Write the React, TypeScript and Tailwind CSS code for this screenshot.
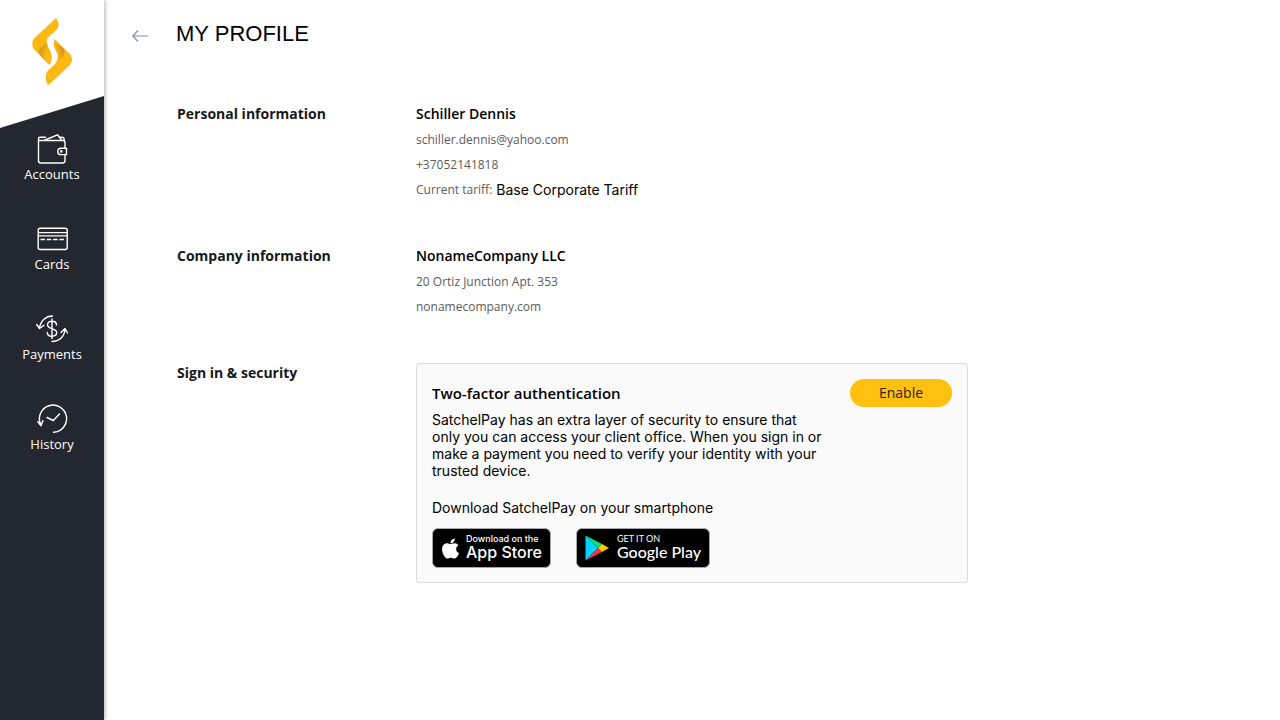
import type { ReactNode } from "react"
import { FaApple } from "react-icons/fa"

interface NavItem {
    label: string
    icon: ReactNode
}

/* ================= ICONS ================= */
const WalletIcon = () => (
    <svg width="32" height="32" viewBox="0 0 32 32" fill="none" stroke="currentColor" strokeWidth="1.4" strokeLinecap="round" strokeLinejoin="round">
        <path d="M29 14V8.500a2 2 0 0 0-2-2H4a1.500 1.500 0 0 1 0-3.200h5.500M29 21v5.500a2.500 2.500 0 0 1-2.500 2.500H5a2.500 2.500 0 0 1-2.500-2.500V5" />
        <path d="M9 6 21.500 0.800 25.500 6M22 1.500l2 2M24.500 3.300H26q2 0 2.200 2.500" />
        <path d="M30.500 14.200H25a3.200 3.200 0 0 0 0 6.400h5.500z" />
        <circle cx="25.300" cy="17.400" r="0.600" />
    </svg>
)

const CardIcon = () => (
    <svg width="32" height="32" viewBox="0 0 32 32" fill="none" stroke="currentColor" strokeWidth="1.4">
        <rect x="2.200" y="4.300" width="29" height="21.200" rx="2" />
        <path d="M2.200 8.600h29M2.200 11.900h29" />
        <path d="M4.500 15.500h25" strokeDasharray="4.500 1.800" />
    </svg>
)

const PaymentsIcon = () => (
    <svg width="32" height="32" viewBox="0 0 32 32" fill="none" stroke="currentColor" strokeWidth="1.4" strokeLinecap="round" strokeLinejoin="round">
        <path d="M16.500 2C10 2 4.500 6.500 3.500 14.200M0.700 10.500l2.800 4 4.500-3.200" />
        <path d="M16 27.500c7 0 12.500-4.500 13-12.500M25 18.500l4-4 2.500 4.500" />
        <path d="M20.500 11c0-2.500-2-3.700-4.500-3.700S11.500 8.500 11.500 10.800c0 5 9.200 3 9.200 7.700 0 2.300-2.200 3.700-4.700 3.700s-4.700-1.400-4.700-3.800M16 5v19.500" />
    </svg>
)

const HistoryIcon = () => (
    <svg width="32" height="32" viewBox="0 0 32 32" fill="none" stroke="currentColor" strokeWidth="1.4" strokeLinecap="round" strokeLinejoin="round">
        <path d="M17.500 28.300A13.600 13.600 0 1 0 4.700 20.500M1.800 17.700l3.200 4 1.900-5" />
        <path d="m11 13.500 6.300 3 6.200-6.500" />
    </svg>
)

const Logo = () => (
    <svg width="42" height="68" viewBox="31 18 42 68" role="img" aria-label="SatchelPay">
        <defs>
            <linearGradient id="foldLeft" x1="0" y1="0" x2="1" y2="0.6">
                <stop offset="0" stopColor="#c98a1b" />
                <stop offset="0.700" stopColor="#fdb913" />
            </linearGradient>
            <linearGradient id="foldRight" x1="1" y1="0.2" x2="0" y2="0.8">
                <stop offset="0" stopColor="#c98a1b" />
                <stop offset="0.700" stopColor="#fdb913" />
            </linearGradient>
        </defs>
        <path d="M56 18Q61 25 56.500 30L50 35.500Q45.500 39 47 44Q48 47.500 50.500 52Q53 59 49.500 65L34.500 50Q30 44 34 38.500Z" fill="#fdb913" />
        <path d="M46.800 42.500Q47.500 47 50.500 52Q53 59 49.500 65L41.500 57Q37 51 41 47Z" fill="url(#foldLeft)" />
        <path d="M54.500 39L69.500 53.500Q74.500 59 70 65L48 85.500Q43.500 77 47.500 71L54 65Q59 60.500 57.500 53.500Q52.500 46 54.500 39Z" fill="#fdb913" />
        <path d="M54 41.500L63 48Q66.500 53 61.500 58L55.500 63.500Q59 59 57.500 53.500Q53 47 54 41.500Z" fill="url(#foldRight)" />
    </svg>
)

const PlayLogo = () => (
    <svg width="24" height="26" viewBox="0 0 24 26">
        <path d="M0.500 0.500v25L13 13z" fill="#00d2ff" />
        <path d="M0.500 0.500 17 9l-4 4z" fill="#00e676" />
        <path d="M0.500 25.500 17 17l-4-4z" fill="#f43249" />
        <path d="M17 9l7 4-7 4-4-4z" fill="#ffc900" />
    </svg>
)

const navItems: NavItem[] = [
    { label: "Accounts", icon: <WalletIcon /> },
    { label: "Cards", icon: <CardIcon /> },
    { label: "Payments", icon: <PaymentsIcon /> },
    { label: "History", icon: <HistoryIcon /> },
]

/* ================= SECTION ROW ================= */
function Section({ title, children }: { title: string; children: ReactNode }) {
    return (
        <section className="grid grid-cols-[239px_minmax(0,552px)]">
            <h2 className="text-sm leading-[26px] font-bold text-[#16181c]">{title}</h2>
            <div>{children}</div>
        </section>
    )
}

export default function App() {
    return (
        <div className="flex min-h-screen bg-white font-['Open_Sans',sans-serif] text-black">
            {/* --- SIDEBAR --- */}
            <aside className="flex w-[104px] shrink-0 flex-col shadow-[1px_0_4px_rgba(0,0,0,0.3)]">
                <a href="#" className="flex h-24 items-start justify-center pt-[18px]">
                    <Logo />
                </a>
                <nav className="flex flex-1 flex-col gap-5 bg-[#23272f] pt-[38px] [clip-path:polygon(0_32px,100%_0,100%_100%,0_100%)]">
                    {navItems.map((item) => (
                        <a key={item.label} href="#" className="flex h-[70px] flex-col items-center text-[13px] leading-4 text-white">
                            {item.icon}
                            {item.label}
                        </a>
                    ))}
                </nav>
            </aside>

            {/* --- PROFILE --- */}
            <main className="flex-1 px-7 pt-5">
                <header className="flex h-7 items-center gap-7">
                    <button type="button" aria-label="Back" className="pt-1 text-[#7c95a3]">
                        <svg width="16" height="14" viewBox="0 0 16 14" fill="none" stroke="currentColor" strokeWidth="1.2">
                            <path d="M16 7H0.800M6 1.500 0.800 7 6 12.500" />
                        </svg>
                    </button>
                    <h1 className="font-['Liberation_Sans',sans-serif] text-[22px] leading-7">MY PROFILE</h1>
                </header>

                <div className="mt-[53px] flex flex-col gap-[41px] pl-[45px]">
                    <Section title="Personal information">
                        <p className="text-sm leading-[26px] font-semibold">Schiller Dennis</p>
                        <div className="text-xs leading-[25px] text-[#5c5c5c]">
                            <p>schiller.dennis@yahoo.com</p>
                            <p>+37052141818</p>
                            <p className="flex gap-1">
                                Current tariff:
                                <span className="font-[Inter,sans-serif] text-sm leading-[25px] text-black">Base Corporate Tariff</span>
                            </p>
                        </div>
                    </Section>

                    <Section title="Company information">
                        <p className="text-sm leading-[26px] font-semibold">NonameCompany LLC</p>
                        <div className="text-xs leading-[25px] text-[#5c5c5c]">
                            <p>20 Ortiz Junction Apt. 353</p>
                            <p>nonamecompany.com</p>
                        </div>
                    </Section>

                    <Section title="Sign in & security">
                        <div className="mt-[3px] rounded-[3px] border border-[#dcdcdc] bg-[#fafafa] p-[15px] pb-3.5">
                            <div className="flex items-center justify-between">
                                <h3 className="text-[15px] leading-7 font-semibold">Two-factor authentication</h3>
                                <button type="button" className="h-7 w-[102px] rounded-full bg-[#ffc010] text-sm text-[#2a2410]">
                                    Enable
                                </button>
                            </div>
                            <div className="font-[Inter,sans-serif] text-sm leading-[17px]">
                                <p className="mt-1 max-w-[392px]">
                                    SatchelPay has an extra layer of security to ensure that only you can access your client office. When you sign in or
                                    make a payment you need to verify your identity with your trusted device.
                                </p>
                                <p className="mt-5">Download SatchelPay on your smartphone</p>
                            </div>
                            <div className="mt-3 flex gap-[25px]">
                                <a href="#" className="flex h-10 w-[119px] items-center gap-1 rounded-md border border-[#a6a6a6] bg-black pl-1.5 text-white">
                                    <FaApple size={23} />
                                    <span className="flex flex-col pb-1 font-[Inter,sans-serif] whitespace-nowrap">
                                        <span className="text-[9px] leading-[11px] font-medium">Download on the</span>
                                        <span className="text-base leading-4 font-medium">App Store</span>
                                    </span>
                                </a>
                                <a href="#" className="flex h-10 w-[134px] items-center gap-2 rounded-md border border-[#a6a6a6] bg-black pl-2 text-white">
                                    <PlayLogo />
                                    <span className="flex flex-col pb-1 font-[Lato,sans-serif] whitespace-nowrap">
                                        <span className="text-[9px] leading-[11px]">GET IT ON</span>
                                        <span className="text-base leading-4 font-medium">Google Play</span>
                                    </span>
                                </a>
                            </div>
                        </div>
                    </Section>
                </div>
            </main>
        </div>
    )
}
